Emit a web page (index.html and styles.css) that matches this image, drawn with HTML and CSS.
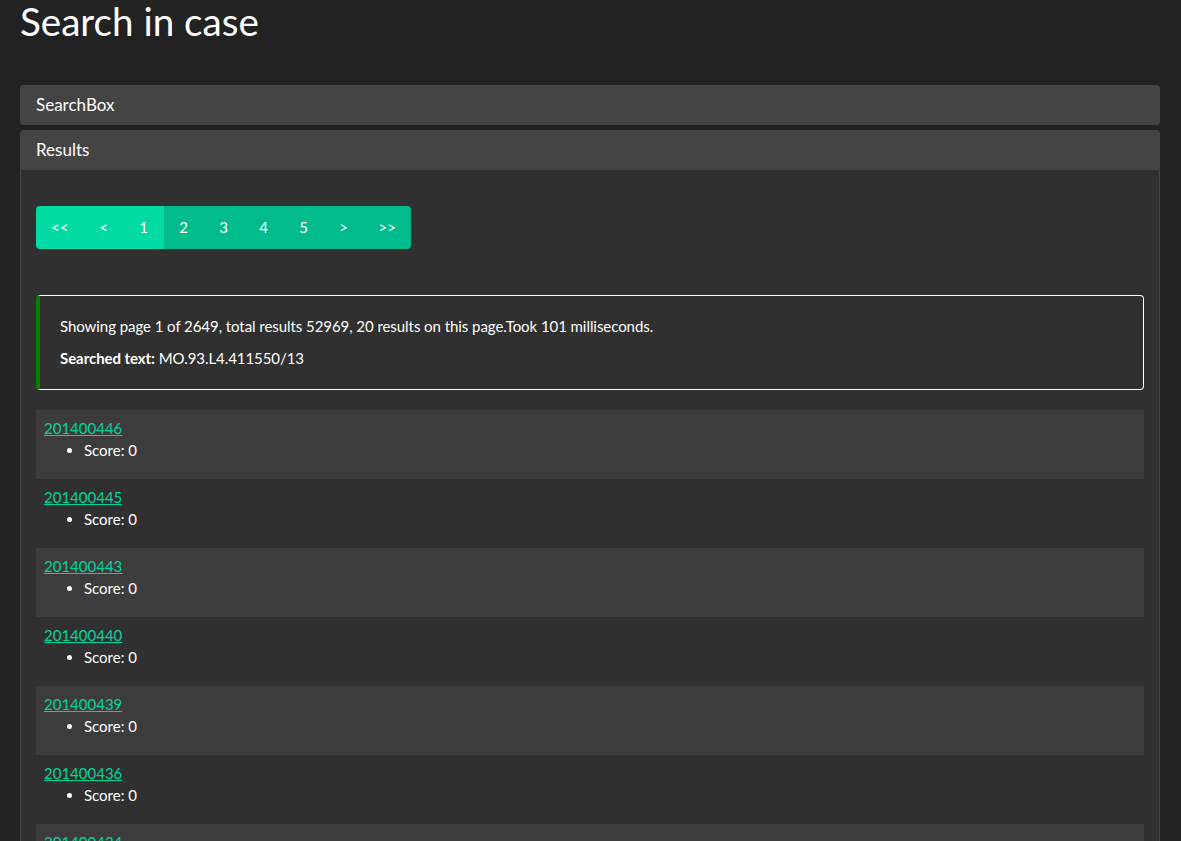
FILE: index.html
```html
<!DOCTYPE html>
<html lang="en">
<head>
<meta charset="utf-8">
<title>Search in case</title>
<link rel="stylesheet" href="styles.css">
</head>
<body>
<div class="page">
  <h1 class="title">Search in case</h1>
  <div class="panel-group">
    <div class="panel">
      <div class="panel-heading">SearchBox</div>
    </div>
    <div class="panel">
      <div class="panel-heading">Results</div>
      <div class="panel-body">
        <ul class="pagination">
          <li class="pg light wide">&lt;&lt;</li>
          <li class="pg light">&lt;</li>
          <li class="pg light">1</li>
          <li class="pg">2</li>
          <li class="pg">3</li>
          <li class="pg">4</li>
          <li class="pg">5</li>
          <li class="pg">&gt;</li>
          <li class="pg wide">&gt;&gt;</li>
        </ul>
        <div class="info">
          <p>Showing page 1 of 2649, total results 52969, 20 results on this page.Took 101 milliseconds.</p>
          <p><strong>Searched text:</strong> MO.93.L4.411550/13</p>
        </div>
        <table class="results">
          <tbody>
            <tr><td><a href="#">201400446</a><ul><li>Score: 0</li></ul></td></tr>
            <tr><td><a href="#">201400445</a><ul><li>Score: 0</li></ul></td></tr>
            <tr><td><a href="#">201400443</a><ul><li>Score: 0</li></ul></td></tr>
            <tr><td><a href="#">201400440</a><ul><li>Score: 0</li></ul></td></tr>
            <tr><td><a href="#">201400439</a><ul><li>Score: 0</li></ul></td></tr>
            <tr><td><a href="#">201400436</a><ul><li>Score: 0</li></ul></td></tr>
            <tr><td><a href="#">201400434</a><ul><li>Score: 0</li></ul></td></tr>
            <tr><td><a href="#">201400433</a><ul><li>Score: 0</li></ul></td></tr>
            <tr><td><a href="#">201400431</a><ul><li>Score: 0</li></ul></td></tr>
            <tr><td><a href="#">201400430</a><ul><li>Score: 0</li></ul></td></tr>
          </tbody>
        </table>
      </div>
    </div>
  </div>
</div>
</body>
</html>
```
FILE: styles.css
```css
html, body {
  margin: 0;
  padding: 0;
  background: #222222;
  color: #ffffff;
  font-family: Lato, "Liberation Sans", sans-serif;
  font-size: 15px;
  line-height: 1.42857;
}

.page {
  padding: 0 21px 0 20px;
}

.title {
  margin: 0 0 42px;
  font-size: 38.6px;
  font-weight: 400;
  line-height: 43px;
}

.panel-group {
  display: flex;
  flex-direction: column;
  gap: 5px;
}

.panel {
  background: #303030;
  border-radius: 4px;
  overflow: hidden;
}

.panel-heading {
  background: #444444;
  padding: 10px 15px 10px 16px;
  font-size: 17px;
  line-height: 20px;
}

.panel-body {
  border: 1px solid #464545;
  border-top: none;
  padding: 36px 15px 0;
}

.pagination {
  display: flex;
  margin: 0 0 46px;
  padding: 0;
  list-style: none;
  width: max-content;
  border-radius: 4px;
  overflow: hidden;
}

.pg {
  width: 40px;
  height: 43px;
  display: flex;
  align-items: center;
  justify-content: center;
  background: #00bc8c;
  color: #ffffff;
  font-size: 15px;
  padding-top: 1px;
  box-sizing: border-box;
}

.pg.wide {
  width: 47.5px;
}

.pg.light {
  background: #00dba4;
}

.info {
  border: 1px solid #ffffff;
  border-left: 4px solid #008000;
  border-radius: 4px;
  padding: 20px;
  margin-bottom: 20px;
  font-size: 15px;
  line-height: 21px;
  letter-spacing: -0.06px;
}

.info p {
  margin: 0 0 11px;
}

.info p:last-child {
  margin: 0;
}

.results {
  width: 100%;
  border-collapse: collapse;
  line-height: 21.5px;
}

.results td {
  padding: 8px;
}

.results tr:nth-child(odd) {
  background: #3c3c3c;
}

.results a {
  color: #00d59c;
  text-decoration: underline;
}

.results ul {
  margin: 0 0 10px;
  padding-left: 40px;
}
```
